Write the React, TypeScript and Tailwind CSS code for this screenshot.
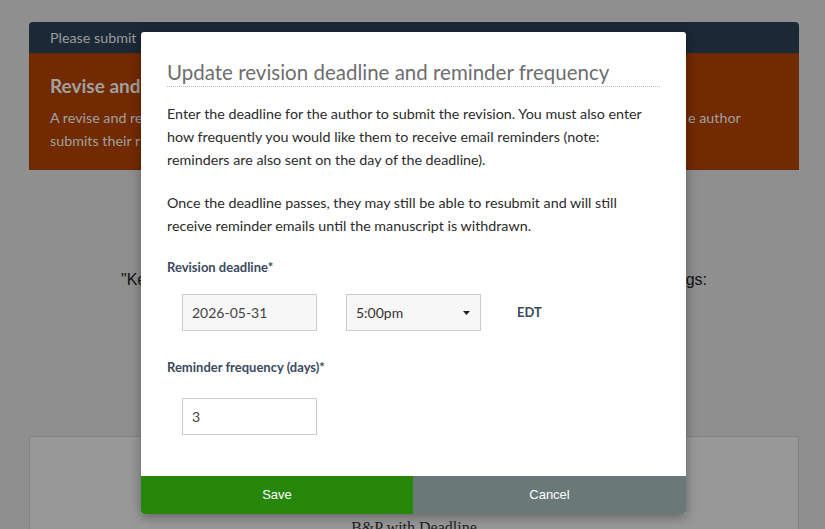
import React from "react";

export default function App() {
  return (
    <div className="relative w-[825px] h-[529px] overflow-hidden bg-[#8f8f8f]" style={{ fontFamily: '"Lato", "Liberation Sans", sans-serif' }}>
      {/* Background page */}
      <div className="pt-[22px] px-[29px] w-[799px] box-content">
        <div className="w-[770px]">
          <div className="h-[31px] bg-[#1b2836] rounded-t-[4px] flex items-center px-[21px] text-[14.3px] text-[#9c9c9c]">
            Please submit
          </div>
          <div className="h-[117px] bg-[#722a00] border border-[#6a2800] px-[20px] pt-[20px]">
            <div className="text-[19px] font-bold text-[#a0a0a0] leading-[24px]">Revise and</div>
            <div className="mt-[8px] text-[14.3px] leading-[23px] text-[#a0a0a0] flex">
              <span className="w-[638px]">A revise and re</span>
              <span>e author</span>
            </div>
            <div className="text-[14.3px] leading-[23px] text-[#a0a0a0]">submits their r</div>
          </div>
          <div className="pt-[100px] h-[266px]">
            <div className="h-[20px] flex items-center justify-between text-[16px] text-[#111] px-[92px]" style={{ fontFamily: '"Liberation Sans", sans-serif' }}>
              <span>"Ke</span>
              <span>gs:</span>
            </div>
          </div>
          <div className="h-[120px] bg-[#989898] border border-[#828282] flex justify-center pt-[81px] text-[16px] leading-[20px] text-[#222]" style={{ fontFamily: '"Liberation Serif", serif' }}>
            B&amp;P with Deadline
          </div>
        </div>
      </div>

      {/* Modal */}
      <div className="absolute left-[141px] top-[32px] w-[545px] bg-white rounded-[3px] shadow-[0_3px_12px_rgba(0,0,0,0.35)] overflow-hidden">
        <div className="px-[26px] pt-[27px]">
          <h2 className="text-[20.5px] leading-[26px] font-normal text-[#6e6e6e] pb-[1px] border-b border-dotted border-[#bdbdbd]">
            Update revision deadline and reminder frequency
          </h2>
          <p className="mt-[15px] text-[14.3px] leading-[23px] text-[#2b2b2b]">
            Enter the deadline for the author to submit the revision. You must also enter how frequently you would like them to receive email reminders (note: reminders are also sent on the day of the deadline).
          </p>
          <p className="mt-[20px] text-[14.3px] leading-[23px] text-[#2b2b2b]">
            Once the deadline passes, they may still be able to resubmit and will still receive reminder emails until the manuscript is withdrawn.
          </p>
          <div className="mt-[19px] text-[13px] leading-[23px] font-bold text-[#3b4a5e]">Revision deadline*</div>
          <div className="mt-[15px] pl-[15px] flex items-center">
            <div className="w-[135px] h-[37px] bg-[#f7f7f7] border border-[#cccccc] flex items-center px-[9px] text-[14px] text-[#444]">
              2026-05-31
            </div>
            <div className="ml-[29px] w-[135px] h-[37px] bg-[#f7f7f7] border border-[#cccccc] flex items-center justify-between px-[9px] text-[14px] text-[#333]">
              <span>5:00pm</span>
              <svg width="7" height="4" viewBox="0 0 7 4" className="mr-[1px]"><path d="M0 0h7L3.5 4z" fill="#222" /></svg>
            </div>
            <div className="ml-[36px] text-[13px] font-bold text-[#3b4a5e]">EDT</div>
          </div>
          <div className="mt-[25px] text-[13px] leading-[23px] font-bold text-[#3b4a5e]">Reminder frequency (days)*</div>
          <div className="mt-[19px] pl-[15px]">
            <div className="w-[135px] h-[37px] bg-white border border-[#cccccc] flex items-center px-[9px] text-[14px] text-[#444]">
              3
            </div>
          </div>
        </div>
        <div className="mt-[41px] flex h-[38px] text-[13px] text-white" style={{ fontFamily: '"Liberation Sans", sans-serif' }}>
          <button className="w-[272px] bg-[#27870b] flex items-center justify-center">Save</button>
          <button className="flex-1 bg-[#6b7878] flex items-center justify-center">Cancel</button>
        </div>
      </div>
    </div>
  );
}
